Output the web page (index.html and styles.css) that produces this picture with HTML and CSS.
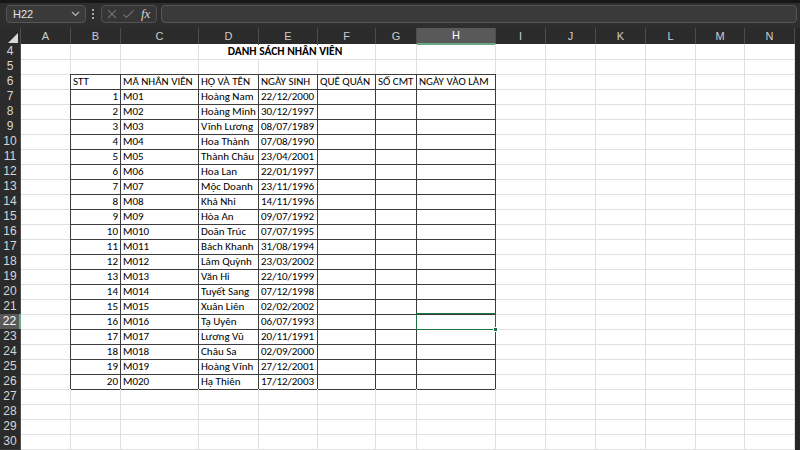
FILE: index.html
```html
<!DOCTYPE html>
<html lang="vi">
<head>
    <meta charset="UTF-8">
    <title>Danh sách nhân viên</title>
    <link rel="stylesheet" href="styles.css">
</head>
<body>
<div class="topbar">
    <div class="namebox">
        <span>H22</span>
        <svg width="9" height="6" viewBox="0 0 9 6"><polyline points="1,1 4.5,4.5 8,1" fill="none" stroke="#b5b5b5" stroke-width="1.2"/></svg>
    </div>
    <svg class="dots" width="4" height="14" viewBox="0 0 4 14"><circle cx="2" cy="3" r="1" fill="#cfcfcf"/><circle cx="2" cy="7" r="1" fill="#cfcfcf"/><circle cx="2" cy="11" r="1" fill="#cfcfcf"/></svg>
    <div class="fxbox">
        <svg width="12" height="12" viewBox="0 0 12 12"><path d="M2 2 L10 10 M10 2 L2 10" stroke="#6e6e6e" stroke-width="1.1"/></svg>
        <svg width="13" height="12" viewBox="0 0 13 12"><polyline points="1.5,6.5 4.5,9.5 11.5,2.5" fill="none" stroke="#6e6e6e" stroke-width="1.1"/></svg>
        <span class="fx">fx</span>
    </div>
    <div class="formula"></div>
</div>

<div class="sheet">
    <div class="hdr">
        <span class="corner"><svg width="12" height="12" viewBox="0 0 12 12"><polygon points="11,1 11,11 1,11" fill="#d9d9d9"/></svg></span>
        <span>A</span><span>B</span><span>C</span><span>D</span><span>E</span><span>F</span><span>G</span>
        <span class="on">H</span><span>I</span><span>J</span><span>K</span><span>L</span><span>M</span><span>N</span>
    </div>

    <div class="row"><span class="rh">4</span><span></span><span></span><span></span><span class="title">DANH SÁCH NHÂN VIÊN</span><span></span><span></span><span></span><span></span><span></span><span></span><span></span><span></span></div>
    <div class="row"><span class="rh">5</span><span></span><span class="t"></span><span class="t"></span><span class="t"></span><span class="t"></span><span class="t"></span><span class="t"></span><span class="t"></span><span></span><span></span><span></span><span></span><span></span><span></span></div>
    <div class="row"><span class="rh">6</span><span class="l"></span><span class="b">STT</span><span class="b">MÃ NHÂN VIÊN</span><span class="b">HỌ VÀ TÊN</span><span class="b">NGÀY SINH</span><span class="b">QUÊ QUÁN</span><span class="b">SỐ CMT</span><span class="b">NGÀY VÀO LÀM</span><span></span><span></span><span></span><span></span><span></span><span></span></div>
    <div class="row"><span class="rh">7</span><span class="l"></span><span class="b r">1</span><span class="b">M01</span><span class="b">Hoàng Nam</span><span class="b">22/12/2000</span><span class="b"></span><span class="b"></span><span class="b"></span><span></span><span></span><span></span><span></span><span></span><span></span></div>
    <div class="row"><span class="rh">8</span><span class="l"></span><span class="b r">2</span><span class="b">M02</span><span class="b">Hoàng Minh</span><span class="b">30/12/1997</span><span class="b"></span><span class="b"></span><span class="b"></span><span></span><span></span><span></span><span></span><span></span><span></span></div>
    <div class="row"><span class="rh">9</span><span class="l"></span><span class="b r">3</span><span class="b">M03</span><span class="b">Vĩnh Lương</span><span class="b">08/07/1989</span><span class="b"></span><span class="b"></span><span class="b"></span><span></span><span></span><span></span><span></span><span></span><span></span></div>
    <div class="row"><span class="rh">10</span><span class="l"></span><span class="b r">4</span><span class="b">M04</span><span class="b">Hoa Thành</span><span class="b">07/08/1990</span><span class="b"></span><span class="b"></span><span class="b"></span><span></span><span></span><span></span><span></span><span></span><span></span></div>
    <div class="row"><span class="rh">11</span><span class="l"></span><span class="b r">5</span><span class="b">M05</span><span class="b">Thành Châu</span><span class="b">23/04/2001</span><span class="b"></span><span class="b"></span><span class="b"></span><span></span><span></span><span></span><span></span><span></span><span></span></div>
    <div class="row"><span class="rh">12</span><span class="l"></span><span class="b r">6</span><span class="b">M06</span><span class="b">Hoa Lan</span><span class="b">22/01/1997</span><span class="b"></span><span class="b"></span><span class="b"></span><span></span><span></span><span></span><span></span><span></span><span></span></div>
    <div class="row"><span class="rh">13</span><span class="l"></span><span class="b r">7</span><span class="b">M07</span><span class="b">Mộc Doanh</span><span class="b">23/11/1996</span><span class="b"></span><span class="b"></span><span class="b"></span><span></span><span></span><span></span><span></span><span></span><span></span></div>
    <div class="row"><span class="rh">14</span><span class="l"></span><span class="b r">8</span><span class="b">M08</span><span class="b">Khả Nhi</span><span class="b">14/11/1996</span><span class="b"></span><span class="b"></span><span class="b"></span><span></span><span></span><span></span><span></span><span></span><span></span></div>
    <div class="row"><span class="rh">15</span><span class="l"></span><span class="b r">9</span><span class="b">M09</span><span class="b">Hòa An</span><span class="b">09/07/1992</span><span class="b"></span><span class="b"></span><span class="b"></span><span></span><span></span><span></span><span></span><span></span><span></span></div>
    <div class="row"><span class="rh">16</span><span class="l"></span><span class="b r">10</span><span class="b">M010</span><span class="b">Doãn Trúc</span><span class="b">07/07/1995</span><span class="b"></span><span class="b"></span><span class="b"></span><span></span><span></span><span></span><span></span><span></span><span></span></div>
    <div class="row"><span class="rh">17</span><span class="l"></span><span class="b r">11</span><span class="b">M011</span><span class="b">Bách Khanh</span><span class="b">31/08/1994</span><span class="b"></span><span class="b"></span><span class="b"></span><span></span><span></span><span></span><span></span><span></span><span></span></div>
    <div class="row"><span class="rh">18</span><span class="l"></span><span class="b r">12</span><span class="b">M012</span><span class="b">Lâm Quỳnh</span><span class="b">23/03/2002</span><span class="b"></span><span class="b"></span><span class="b"></span><span></span><span></span><span></span><span></span><span></span><span></span></div>
    <div class="row"><span class="rh">19</span><span class="l"></span><span class="b r">13</span><span class="b">M013</span><span class="b">Văn Hi</span><span class="b">22/10/1999</span><span class="b"></span><span class="b"></span><span class="b"></span><span></span><span></span><span></span><span></span><span></span><span></span></div>
    <div class="row"><span class="rh">20</span><span class="l"></span><span class="b r">14</span><span class="b">M014</span><span class="b">Tuyết Sang</span><span class="b">07/12/1998</span><span class="b"></span><span class="b"></span><span class="b"></span><span></span><span></span><span></span><span></span><span></span><span></span></div>
    <div class="row"><span class="rh">21</span><span class="l"></span><span class="b r">15</span><span class="b">M015</span><span class="b">Xuân Liên</span><span class="b">02/02/2002</span><span class="b"></span><span class="b"></span><span class="b"></span><span></span><span></span><span></span><span></span><span></span><span></span></div>
    <div class="row"><span class="rh on">22</span><span class="l"></span><span class="b r">16</span><span class="b">M016</span><span class="b">Tạ Uyên</span><span class="b">06/07/1993</span><span class="b"></span><span class="b"></span><span class="b sel"></span><span></span><span></span><span></span><span></span><span></span><span></span></div>
    <div class="row"><span class="rh">23</span><span class="l"></span><span class="b r">17</span><span class="b">M017</span><span class="b">Lương Vũ</span><span class="b">20/11/1991</span><span class="b"></span><span class="b"></span><span class="b"></span><span></span><span></span><span></span><span></span><span></span><span></span></div>
    <div class="row"><span class="rh">24</span><span class="l"></span><span class="b r">18</span><span class="b">M018</span><span class="b">Châu Sa</span><span class="b">02/09/2000</span><span class="b"></span><span class="b"></span><span class="b"></span><span></span><span></span><span></span><span></span><span></span><span></span></div>
    <div class="row"><span class="rh">25</span><span class="l"></span><span class="b r">19</span><span class="b">M019</span><span class="b">Hoàng Vĩnh</span><span class="b">27/12/2001</span><span class="b"></span><span class="b"></span><span class="b"></span><span></span><span></span><span></span><span></span><span></span><span></span></div>
    <div class="row"><span class="rh">26</span><span class="l"></span><span class="b r">20</span><span class="b">M020</span><span class="b">Hạ Thiên</span><span class="b">17/12/2003</span><span class="b"></span><span class="b"></span><span class="b"></span><span></span><span></span><span></span><span></span><span></span><span></span></div>
    <div class="row"><span class="rh">27</span><span></span><span></span><span></span><span></span><span></span><span></span><span></span><span></span><span></span><span></span><span></span><span></span><span></span><span></span></div>
    <div class="row"><span class="rh">28</span><span></span><span></span><span></span><span></span><span></span><span></span><span></span><span></span><span></span><span></span><span></span><span></span><span></span><span></span></div>
    <div class="row"><span class="rh">29</span><span></span><span></span><span></span><span></span><span></span><span></span><span></span><span></span><span></span><span></span><span></span><span></span><span></span><span></span></div>
    <div class="row"><span class="rh">30</span><span></span><span></span><span></span><span></span><span></span><span></span><span></span><span></span><span></span><span></span><span></span><span></span><span></span><span></span></div>
</div>
</body>
</html>
```

FILE: styles.css
```css
body {
    margin: 0;
    padding: 0;
    width: 800px;
    height: 450px;
    overflow: hidden;
    background: #262626;
    font-family: Carlito, "Liberation Sans Narrow", "Liberation Sans", Arial, sans-serif;
    font-size: 11px;
}

/* thanh công thức */
.topbar {
    box-sizing: border-box;
    height: 28px;
    background: #2e2e2e;
    border-top: 3px solid #171717;
    padding: 2px 3px 0 6px;
    display: flex;
    align-items: flex-start;
}

.namebox {
    box-sizing: border-box;
    width: 80px;
    height: 18px;
    background: #3a3a3a;
    border: 1px solid #555;
    border-radius: 4px;
    display: flex;
    align-items: center;
    justify-content: space-between;
    padding: 0 5px 0 6px;
    color: #e4e4e4;
    font-family: "Liberation Sans", Arial, sans-serif;
    font-size: 11px;
}

.dots {
    margin: 2px 6px 0 5px;
}

.fxbox {
    box-sizing: border-box;
    width: 56px;
    height: 18px;
    background: #363636;
    border: 1px solid #525252;
    border-radius: 4px;
    display: flex;
    align-items: center;
    gap: 4px;
    padding: 0 4px;
}

.fx {
    font-family: "Liberation Serif", serif;
    font-style: italic;
    font-size: 13px;
    color: #d4d4d4;
    margin-left: 2px;
}

.formula {
    box-sizing: border-box;
    flex: 1;
    height: 18px;
    margin-left: 4px;
    background: #3a3a3a;
    border: 1px solid #555;
    border-radius: 4px;
}

/* bảng tính */
.sheet {
    width: 795px;
    background: #fff;
}

.hdr, .row {
    display: grid;
    grid-template-columns: 21px 50px 50px 78px 60px 59px 58px 41px 79px 50px 50px 50px 50px 49px 50px;
}

.hdr {
    height: 16px;
    background: #2b2b2b;
    color: #cdcdcd;
    font-family: "Liberation Sans", Arial, sans-serif;
    font-size: 11px;
}

.hdr span {
    box-sizing: border-box;
    border-right: 1px solid #4d4d4d;
    text-align: center;
    line-height: 16px;
}

.hdr .corner {
    display: flex;
    align-items: flex-end;
    justify-content: flex-end;
    padding: 0 1px 1px 0;
}

.hdr .on {
    background: #595959;
    color: #fff;
    border-bottom: 2px solid #6aa984;
    line-height: 15px;
}

.row {
    height: 15px;
}

.row span {
    box-sizing: border-box;
    border-right: 1px solid #e0e0e0;
    border-bottom: 1px solid #e0e0e0;
    padding: 0 2px;
    line-height: 15px;
    white-space: nowrap;
    color: #000;
}

.row .rh {
    background: #2b2b2b;
    color: #d6d6d6;
    border-right: 1px solid #4d4d4d;
    border-bottom: 1px solid #383838;
    padding: 0;
    text-align: center;
    font-family: "Liberation Sans", Arial, sans-serif;
    font-size: 12px;
}

.row .rh.on {
    background: #595959;
    color: #fff;
    border-right: 2px solid #6aa984;
}

.row .b {
    border-right-color: #3d3d3d;
    border-bottom-color: #3d3d3d;
}

.row .l {
    border-right-color: #3d3d3d;
}

.row .t {
    border-bottom-color: #3d3d3d;
}

.row .r {
    text-align: right;
}

.row .title {
    grid-column: span 3;
    text-align: center;
    font-weight: bold;
    font-size: 11.5px;
    padding-right: 6px;
}

.row .sel {
    position: relative;
}

.row .sel::before {
    content: "";
    position: absolute;
    left: -1px;
    top: -1px;
    right: -1px;
    bottom: -1px;
    border: 1px solid #1e7145;
}

.row .sel::after {
    content: "";
    position: absolute;
    right: -3px;
    bottom: -3px;
    width: 3px;
    height: 3px;
    background: #1e7145;
    border: 1px solid #fff;
}
```
